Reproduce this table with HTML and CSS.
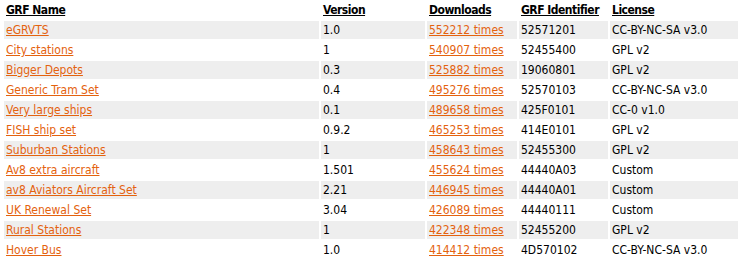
FILE: index.html
```html
<!DOCTYPE html>
<html>
<head>
<meta charset="utf-8">
<link rel="stylesheet" href="styles.css">
</head>
<body>
<table class="grf">
  <thead>
    <tr>
      <th class="c-name"><a class="hd">GRF Name</a></th>
      <th class="c-ver"><a class="hd">Version</a></th>
      <th class="c-dl"><a class="hd">Downloads</a></th>
      <th class="c-id"><a class="hd">GRF Identifier</a></th>
      <th class="c-lic"><a class="hd">License</a></th>
    </tr>
  </thead>
  <tbody>
    <tr class="odd"><td><a>eGRVTS</a></td><td>1.0</td><td><a>552212 times</a></td><td>52571201</td><td>CC-BY-NC-SA v3.0</td></tr>
    <tr><td><a>City stations</a></td><td>1</td><td><a>540907 times</a></td><td>52455400</td><td>GPL v2</td></tr>
    <tr class="odd"><td><a>Bigger Depots</a></td><td>0.3</td><td><a>525882 times</a></td><td>19060801</td><td>GPL v2</td></tr>
    <tr><td><a>Generic Tram Set</a></td><td>0.4</td><td><a>495276 times</a></td><td>52570103</td><td>CC-BY-NC-SA v3.0</td></tr>
    <tr class="odd"><td><a>Very large ships</a></td><td>0.1</td><td><a>489658 times</a></td><td>425F0101</td><td>CC-0 v1.0</td></tr>
    <tr><td><a>FISH ship set</a></td><td>0.9.2</td><td><a>465253 times</a></td><td>414E0101</td><td>GPL v2</td></tr>
    <tr class="odd"><td><a>Suburban Stations</a></td><td>1</td><td><a>458643 times</a></td><td>52455300</td><td>GPL v2</td></tr>
    <tr><td><a>Av8 extra aircraft</a></td><td>1.501</td><td><a>455624 times</a></td><td>44440A03</td><td>Custom</td></tr>
    <tr class="odd"><td><a>av8 Aviators Aircraft Set</a></td><td>2.21</td><td><a>446945 times</a></td><td>44440A01</td><td>Custom</td></tr>
    <tr><td><a>UK Renewal Set</a></td><td>3.04</td><td><a>426089 times</a></td><td>44440111</td><td>Custom</td></tr>
    <tr class="odd"><td><a>Rural Stations</a></td><td>1</td><td><a>422348 times</a></td><td>52455200</td><td>GPL v2</td></tr>
    <tr><td><a>Hover Bus</a></td><td>1.0</td><td><a>414412 times</a></td><td>4D570102</td><td>CC-BY-NC-SA v3.0</td></tr>
  </tbody>
</table>
</body>
</html>
```

FILE: styles.css
```css
html, body {
  margin: 0;
  padding: 0;
  background: #ffffff;
}
body {
  font-family: "DejaVu Sans Condensed", "DejaVu Sans", Verdana, sans-serif;
  font-stretch: condensed;
  font-size: 12px;
  color: #000000;
}
.grf {
  margin: -1px 0 0 2px;
  border-spacing: 2px;
  width: 738px;
  table-layout: fixed;
}
.grf th, .grf td {
  height: 18px;
  padding: 0 0 0 2px;
  text-align: left;
  vertical-align: middle;
  white-space: nowrap;
  box-sizing: border-box;
}
.grf th {
  font-weight: bold;
  letter-spacing: -0.5px;
}
.c-name { width: 315px; }
.c-ver { width: 104px; }
.c-dl { width: 90px; }
.c-id { width: 89px; }
.c-lic { width: 128px; }
.grf a {
  color: #e4620e;
  text-decoration: underline;
}
.grf a.hd {
  color: #000000;
}
.grf tr.odd td {
  background: #eeeeee;
}
```
